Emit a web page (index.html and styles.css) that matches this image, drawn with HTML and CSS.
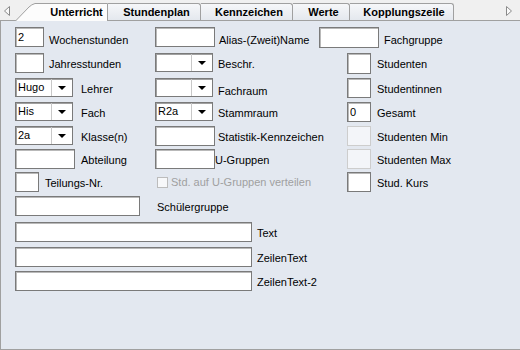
FILE: index.html
```html
<!DOCTYPE html>
<html lang="de">

<head>
    <meta charset="UTF-8">
    <meta name="viewport" content="width=device-width, initial-scale=1.0">
    <link rel="stylesheet" href="styles.css">
</head>

<body>
    <div class="tabs">
        <svg class="arrow arrow--left" width="6" height="10" viewBox="0 0 6 10">
            <path d="M5.5 0.5 L0.5 5 L5.5 9.5 Z" fill="#fafafa" stroke="#8a8a8a" stroke-width="1"/>
        </svg>
        <div class="tab tab--active">
            <svg class="tab__shape" width="93" height="18" viewBox="0 0 93 18">
                <path d="M0.5 18 L14 4 Q16.5 1.5 20 0.5 L92.5 0.5 L92.5 18" fill="#fcfcfc" stroke="#a0a0a0" stroke-width="1"/>
            </svg>
            <span class="tab__text">Unterricht</span>
        </div>
        <div class="tab" style="width: 93px">Stundenplan</div>
        <div class="tab" style="width: 92px">Kennzeichen</div>
        <div class="tab" style="width: 57px">Werte</div>
        <div class="tab" style="width: 104px">Kopplungszeile</div>
        <svg class="arrow arrow--right" width="6" height="10" viewBox="0 0 6 10">
            <path d="M0.5 0.5 L5.5 5 L0.5 9.5 Z" fill="#fafafa" stroke="#8a8a8a" stroke-width="1"/>
        </svg>
    </div>

    <div class="panel">
        <div class="form-grid">
            <!-- Zeile 1 -->
            <div class="cell">
                <input class="box" style="width: 29px" type="text" value="2">
                <label class="lbl lbl--low" style="margin-left: 5px">Wochenstunden</label>
            </div>
            <div class="cell">
                <input class="box" style="width: 60px" type="text">
                <label class="lbl lbl--low" style="margin-left: 4px">Alias-(Zweit)Name</label>
            </div>
            <div class="cell">
                <input class="box" style="width: 60px; height: 21px" type="text">
                <label class="lbl lbl--low" style="margin-left: 5px">Fachgruppe</label>
            </div>

            <!-- Zeile 2 -->
            <div class="cell">
                <input class="box" style="width: 29px" type="text">
                <label class="lbl" style="margin-left: 5px">Jahresstunden</label>
            </div>
            <div class="cell">
                <div class="combo"><span class="combo__value"></span><span class="combo__drop"></span></div>
                <label class="lbl" style="margin-left: 5px">Beschr.</label>
            </div>
            <div class="cell cell--small">
                <input class="box" style="width: 24px; height: 21px" type="text">
                <label class="lbl" style="margin-left: 6px">Studenten</label>
            </div>

            <!-- Zeile 3 -->
            <div class="cell">
                <div class="combo"><span class="combo__value">Hugo</span><span class="combo__drop"></span></div>
                <label class="lbl" style="margin-left: 8px">Lehrer</label>
            </div>
            <div class="cell">
                <div class="combo"><span class="combo__value"></span><span class="combo__drop"></span></div>
                <label class="lbl lbl--low" style="margin-left: 5px">Fachraum</label>
            </div>
            <div class="cell cell--small">
                <input class="box" style="width: 24px" type="text">
                <label class="lbl" style="margin-left: 6px">Studentinnen</label>
            </div>

            <!-- Zeile 4 -->
            <div class="cell">
                <div class="combo"><span class="combo__value">His</span><span class="combo__drop"></span></div>
                <label class="lbl" style="margin-left: 8px">Fach</label>
            </div>
            <div class="cell">
                <div class="combo"><span class="combo__value">R2a</span><span class="combo__drop"></span></div>
                <label class="lbl" style="margin-left: 5px">Stammraum</label>
            </div>
            <div class="cell cell--small">
                <input class="box" style="width: 24px" type="text" value="0">
                <label class="lbl" style="margin-left: 6px">Gesamt</label>
            </div>

            <!-- Zeile 5 -->
            <div class="cell">
                <div class="combo"><span class="combo__value">2a</span><span class="combo__drop"></span></div>
                <label class="lbl" style="margin-left: 8px">Klasse(n)</label>
            </div>
            <div class="cell">
                <input class="box" style="width: 60px" type="text">
                <label class="lbl" style="margin-left: 3px">Statistik-Kennzeichen</label>
            </div>
            <div class="cell cell--small">
                <input class="box box--disabled" style="width: 24px" type="text" disabled>
                <label class="lbl" style="margin-left: 6px">Studenten Min</label>
            </div>

            <!-- Zeile 6 -->
            <div class="cell">
                <input class="box" style="width: 60px" type="text">
                <label class="lbl" style="margin-left: 6px">Abteilung</label>
            </div>
            <div class="cell">
                <input class="box" style="width: 60px" type="text">
                <label class="lbl" style="margin-left: 0">U-Gruppen</label>
            </div>
            <div class="cell cell--small">
                <input class="box box--disabled" style="width: 24px" type="text" disabled>
                <label class="lbl" style="margin-left: 6px">Studenten Max</label>
            </div>

            <!-- Zeile 7 -->
            <div class="cell">
                <input class="box" style="width: 24px" type="text">
                <label class="lbl" style="margin-left: 6px">Teilungs-Nr.</label>
            </div>
            <div class="cell cell--check">
                <span class="check"></span>
                <label class="lbl lbl--disabled" style="margin-left: 3px">Std. auf U-Gruppen verteilen</label>
            </div>
            <div class="cell cell--small">
                <input class="box" style="width: 24px" type="text">
                <label class="lbl" style="margin-left: 6px">Stud. Kurs</label>
            </div>

            <!-- Zeile 8 - 11 -->
            <div class="cell cell--wide">
                <input class="box" style="width: 125px" type="text">
                <label class="lbl" style="margin-left: 17px">Schülergruppe</label>
            </div>
            <div class="cell cell--wide">
                <input class="box box--long" type="text">
                <label class="lbl" style="margin-left: 5px">Text</label>
            </div>
            <div class="cell cell--wide">
                <input class="box box--long" type="text">
                <label class="lbl" style="margin-left: 5px">ZeilenText</label>
            </div>
            <div class="cell cell--wide">
                <input class="box box--long" type="text">
                <label class="lbl" style="margin-left: 5px">ZeilenText-2</label>
            </div>
        </div>
    </div>
</body>

</html>
```

FILE: styles.css
```css
        body {
            margin: 0;
            background-color: #f0f0f0;
            font-family: "Liberation Sans", Arial, sans-serif;
            font-size: 11px;
            color: #000;
        }

        /* Reiterleiste */
        .tabs {
            display: flex;
            align-items: flex-end;
            height: 20px;
            border-bottom: 1px solid #a0a0a0;
        }

        .tab {
            box-sizing: border-box;
            height: 17px;
            padding-left: 5px;
            background: linear-gradient(#f6f7f9, #e4e8ee);
            border-top: 1px solid #a0a0a0;
            border-right: 1px solid #a0a0a0;
            border-top-right-radius: 3px;
            font-weight: bold;
            text-align: center;
            line-height: 16px;
            white-space: nowrap;
        }

        .tab--active {
            position: relative;
            width: 93px;
            height: 18px;
            margin-bottom: -1px;
            padding-left: 30px;
            background: none;
            border: none;
            line-height: 18px;
        }

        .tab__shape {
            position: absolute;
            left: 0;
            top: 0;
        }

        .tab__text {
            position: relative;
        }

        .arrow {
            align-self: center;
            flex: none;
        }

        .arrow--left {
            margin: 1px 5px 0 4px;
        }

        .arrow--right {
            margin: 1px 0 0 52px;
        }

        /* Formularbereich */
        .panel {
            box-sizing: border-box;
            height: 329px;
            padding: 6px 0 0 14px;
            background-color: #e3e8f0;
            border-left: 1px solid #a0a0a0;
            border-bottom: 1px solid #a0a0a0;
        }

        .form-grid {
            display: grid;
            grid-template-columns: 140px 164px 1fr;
            grid-template-rows: 26px 25px 24px 24px 23px 23px 24px 26px 25px 24px 20px;
        }

        .cell {
            display: flex;
            align-items: flex-start;
        }

        .cell--small {
            padding-left: 28px;
        }

        .cell--check {
            padding: 4px 0 0 2px;
        }

        .cell--wide {
            grid-column: 1 / 4;
        }

        .box {
            box-sizing: border-box;
            height: 20px;
            margin: 0;
            padding: 0 2px;
            background: #fff;
            border: 1px solid #7a7a7a;
            box-shadow: inset 1px 1px 0 #b9b9b9;
            font-family: "Liberation Sans", Arial, sans-serif;
            font-size: 11px;
            color: #000;
            outline: none;
        }

        .box--disabled {
            background: #f3f5f9;
            border-color: #cdcdcd;
            box-shadow: none;
        }

        .box--long {
            width: 237px;
        }

        .combo {
            box-sizing: border-box;
            display: flex;
            width: 58px;
            height: 19px;
            background: #fff;
            border: 1px solid #7a7a7a;
            box-shadow: inset 1px 1px 0 #a0a0a0;
        }

        .combo__value {
            flex: 1;
            padding: 1px 0 0 2px;
            line-height: 15px;
        }

        .combo__drop {
            box-sizing: border-box;
            display: flex;
            align-items: center;
            justify-content: center;
            width: 21px;
            border-left: 1px solid #c8c8c8;
        }

        .combo__drop::after {
            content: "";
            border-left: 4px solid transparent;
            border-right: 4px solid transparent;
            border-top: 4px solid #000;
        }

        .lbl {
            padding-top: 5px;
            line-height: 13px;
            white-space: nowrap;
        }

        .lbl--low {
            padding-top: 7px;
        }

        .lbl--disabled {
            padding-top: 0;
            color: #a0a0a0;
        }

        .check {
            box-sizing: border-box;
            width: 11px;
            height: 11px;
            margin-top: 1px;
            background: #f7f8fa;
            border: 1px solid #bcbcbc;
        }
```
